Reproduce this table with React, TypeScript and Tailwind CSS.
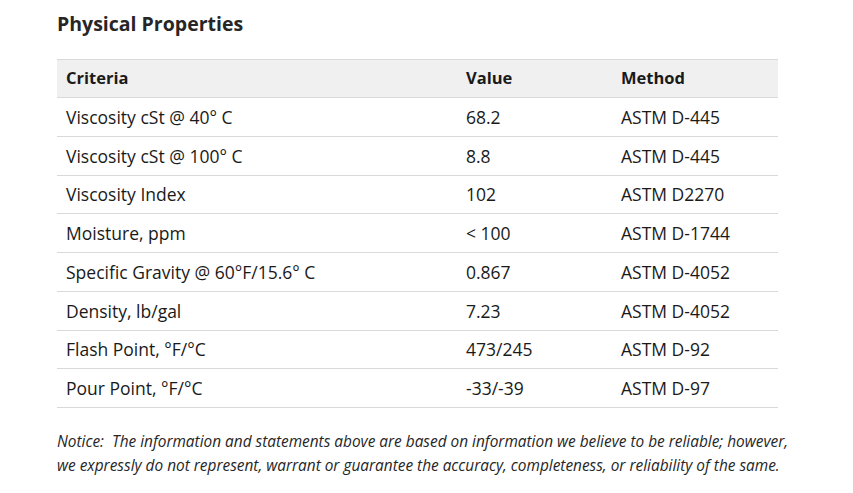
const rows = [
  ["Viscosity cSt @ 40° C", "68.2", "ASTM D-445"],
  ["Viscosity cSt @ 100° C", "8.8", "ASTM D-445"],
  ["Viscosity Index", "102", "ASTM D2270"],
  ["Moisture, ppm", "< 100", "ASTM D-1744"],
  ["Specific Gravity @ 60°F/15.6° C", "0.867", "ASTM D-4052"],
  ["Density, lb/gal", "7.23", "ASTM D-4052"],
  ["Flash Point, °F/°C", "473/245", "ASTM D-92"],
  ["Pour Point, °F/°C", "-33/-39", "ASTM D-97"],
]

export default function App() {
  return (
    <div className="w-[853px] h-[493px] bg-white text-[#1a1a1a] font-['Open_Sans',sans-serif] pl-[57px] pt-[10px]">
      <h2 className="text-[19.5px] font-bold text-[#262626] leading-[28px]">Physical Properties</h2>
      <div className="w-[721px] mt-[21px] text-[17.5px]">
        <div className="flex h-[39px] items-center bg-[#f0f0f0] border-t border-b border-[#d9d9d9] font-bold text-[16.5px]">
          <div className="w-[400px] pl-[9px]">Criteria</div>
          <div className="w-[155px] pl-[9px]">Value</div>
          <div className="flex-1 pl-[9px]">Method</div>
        </div>
        {rows.map((r) => (
          <div key={r[0]} className="flex h-[38.75px] items-center border-b border-[#d9d9d9]">
            <div className="w-[400px] pl-[9px]">{r[0]}</div>
            <div className="w-[155px] pl-[9px]">{r[1]}</div>
            <div className="flex-1 pl-[9px]">{r[2]}</div>
          </div>
        ))}
      </div>
      <p className="mt-[22px] w-[780px] italic text-[15.4px] leading-[24px] text-[#262626] whitespace-nowrap">
        Notice:&nbsp; The information and statements above are based on information we believe to be reliable; however,
        <br />
        we expressly do not represent, warrant or guarantee the accuracy, completeness, or reliability of the same.
      </p>
    </div>
  )
}
